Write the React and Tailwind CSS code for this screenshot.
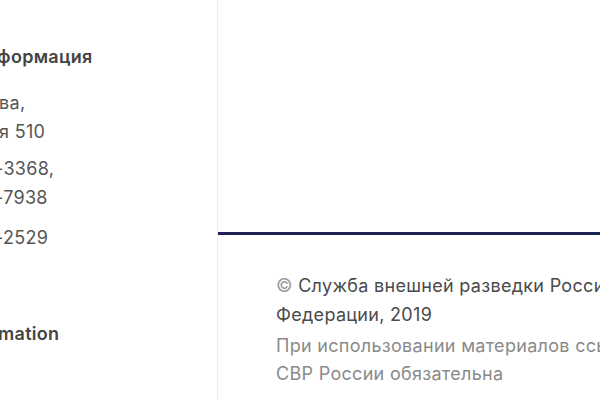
export default function App() {
  const font = { fontFamily: '"Inter", "Noto Sans", sans-serif' };
  return (
    <div className="w-[600px] h-[400px] flex bg-white overflow-hidden" style={font}>
      <div className="w-[218px] shrink-0 border-r border-[#ececec] overflow-hidden text-[18px] tracking-[0.3px] text-[#555]">
        <div className="pt-[43px] leading-[28px] font-semibold text-[#444] whitespace-nowrap ml-[-3px]">формация</div>
        <div className="mt-[17px] leading-[29px] whitespace-nowrap">
          <div className="ml-[-1px]">ва,</div>
          <div className="ml-[-1px]">я 510</div>
        </div>
        <div className="mt-[8px] leading-[29px] whitespace-nowrap">
          <div className="ml-[-5px]">-3368,</div>
          <div className="ml-[-5px]">-7938</div>
        </div>
        <div className="mt-[11px] leading-[29px] whitespace-nowrap">
          <div className="ml-[-5px]">-2529</div>
        </div>
        <div className="mt-[68px] leading-[28px] font-semibold text-[#444] whitespace-nowrap ml-[-2px]">mation</div>
      </div>
      <div className="flex-1 flex flex-col min-w-0">
        <div className="h-[235px] shrink-0 border-b-[3px] border-[#1c2352]"></div>
        <div className="pl-[58px] pt-[36px] text-[18px] tracking-[0.3px] whitespace-nowrap overflow-hidden">
          <p className="leading-[29px] text-[#4a4a4a]"><span className="text-[#9a9a9a]">©</span> Служба внешней разведки Российской<br />Федерации, 2019</p>
          <p className="mt-[3px] leading-[28px] text-[#8a8a8a]">При использовании материалов ссылка на сайт<br />СВР России обязательна</p>
        </div>
      </div>
    </div>
  );
}
